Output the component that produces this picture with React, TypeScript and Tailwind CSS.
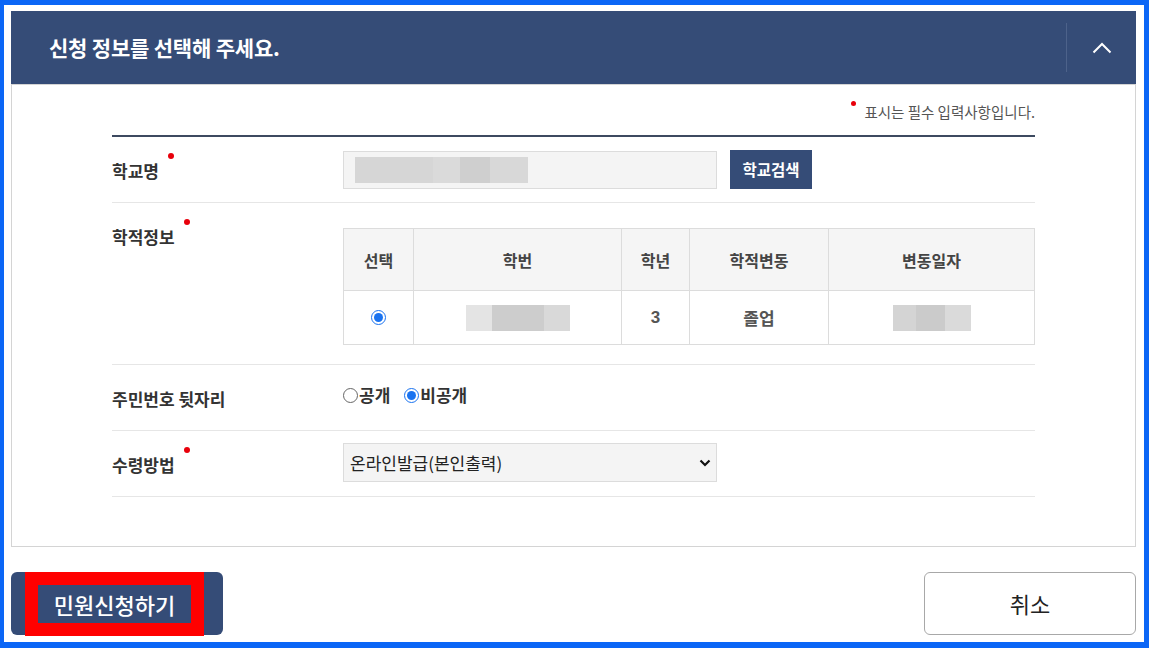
import React from "react";

const FONT = { fontFamily: '"Noto Sans CJK KR", "Noto Sans", sans-serif' };

function Dot() {
  return <span className="absolute -right-[15px] -top-[6px] h-[6px] w-[6px] rounded-full bg-[#e8000b]" />;
}

function Label({ text, required }: { text: string; required?: boolean }) {
  return (
    <div className="w-[231px] shrink-0 pt-[22px]">
      <span className="relative inline-block text-[17px] font-bold leading-[24px] text-[#333]">
        {text}
        {required && <Dot />}
      </span>
    </div>
  );
}

function Blur({ parts }: { parts: [number, string][] }) {
  return (
    <div className="flex h-[26px]">
      {parts.map(([w, c], i) => (
        <div key={i} className="h-full" style={{ width: w, background: c }} />
      ))}
    </div>
  );
}

function Radio({ checked }: { checked?: boolean }) {
  return checked ? (
    <span className="flex h-[15px] w-[15px] items-center justify-center rounded-full border-[1.5px] border-[#1a73f0] bg-white">
      <span className="h-[9px] w-[9px] rounded-full bg-[#1a73f0]" />
    </span>
  ) : (
    <span className="h-[15px] w-[15px] rounded-full border border-[#666] bg-white" />
  );
}

export default function App() {
  const cols = [
    { w: "w-[69px]", h: "선택" },
    { w: "w-[208px]", h: "학번" },
    { w: "w-[68px]", h: "학년" },
    { w: "w-[139px]", h: "학적변동" },
    { w: "flex-1", h: "변동일자" },
  ];

  return (
    <div
      className="flex h-[648px] w-[1149px] flex-col border-b-[6px] border-l-4 border-r-[5px] border-t-[5px] border-[#0b66f6] bg-white pl-[7px] pr-[8px] pt-[6px]"
      style={FONT}
    >
      {/* header */}
      <div className="flex h-[73px] items-center bg-[#354c77]">
        <h2 className="flex-1 pl-[38px] text-[21px] font-bold tracking-[-0.2px] text-white">신청 정보를 선택해 주세요.</h2>
        <div className="flex h-[49px] w-[70px] items-center justify-center border-l border-[#4d628a]">
          <svg width="20" height="12" viewBox="0 0 20 12" fill="none">
            <path d="M1.5 10.5 L10 2 L18.5 10.5" stroke="white" strokeWidth="2" />
          </svg>
        </div>
      </div>

      {/* panel */}
      <div className="h-[463px] border border-[#d4d4d4] px-[100px]">
        <div className="flex h-[50px] items-end justify-end pb-[14px]">
          <span className="relative text-[14.5px] leading-[18px] text-[#555]">
            <span className="absolute -left-[13px] -top-[2px] h-[5px] w-[5px] rounded-full bg-[#e8000b]" />
            표시는 필수 입력사항입니다.
          </span>
        </div>
        <div className="h-[2px] bg-[#3d4a60]" />

        {/* 학교명 */}
        <div className="flex h-[66px] border-b border-[#e6e6e6]">
          <Label text="학교명" required />
          <div className="flex items-center gap-[13px]">
            <div className="flex h-[38px] w-[374px] items-center border border-[#dcdcdc] bg-[#f4f4f4] pl-[11px]">
              <Blur parts={[[78, "#d6d6d6"], [27, "#dadada"], [30, "#cfcfcf"], [38, "#d8d8d8"]]} />
            </div>
            <button className="h-[39px] w-[82px] bg-[#354c77] text-[15.5px] font-bold text-white">학교검색</button>
          </div>
        </div>

        {/* 학적정보 */}
        <div className="flex h-[162px] border-b border-[#e6e6e6]">
          <Label text="학적정보" required />
          <div className="flex-1 pt-[25px]">
            <div className="border border-[#dcdcdc]">
              <div className="flex h-[61px] bg-[#f5f5f5] text-[16px] font-bold text-[#444]">
                {cols.map((c, i) => (
                  <div key={c.h} className={`${c.w} flex items-center justify-center ${i > 0 ? "border-l border-[#dcdcdc]" : ""}`}>
                    {c.h}
                  </div>
                ))}
              </div>
              <div className="flex h-[54px] border-t border-[#dcdcdc] text-[17px] font-bold text-[#555]">
                <div className="flex w-[69px] items-center justify-center">
                  <Radio checked />
                </div>
                <div className="flex w-[208px] items-center justify-center border-l border-[#dcdcdc]">
                  <Blur parts={[[26, "#e4e4e4"], [52, "#cdcdcd"], [26, "#d9d9d9"]]} />
                </div>
                <div className="flex w-[68px] items-center justify-center border-l border-[#dcdcdc]" style={{ fontFamily: '"Liberation Sans", sans-serif' }}>
                  3
                </div>
                <div className="flex w-[139px] items-center justify-center border-l border-[#dcdcdc]">졸업</div>
                <div className="flex flex-1 items-center justify-center border-l border-[#dcdcdc]">
                  <Blur parts={[[23, "#d4d4d4"], [29, "#cbcbcb"], [26, "#dadada"]]} />
                </div>
              </div>
            </div>
          </div>
        </div>

        {/* 주민번호 뒷자리 */}
        <div className="flex h-[66px] border-b border-[#e6e6e6]">
          <Label text="주민번호 뒷자리" />
          <div className="flex items-start gap-[14px] pt-[18px] text-[17px] font-bold leading-[24px] text-[#333]">
            <label className="flex items-center gap-[1px]">
              <Radio />
              공개
            </label>
            <label className="flex items-center gap-[1px]">
              <Radio checked />
              비공개
            </label>
          </div>
        </div>

        {/* 수령방법 */}
        <div className="flex h-[66px] border-b border-[#e6e6e6]">
          <Label text="수령방법" required />
          <div className="pt-[12px]">
            <div className="flex h-[39px] w-[374px] items-center justify-between border border-[#dcdcdc] bg-[#f4f4f4] pl-[6px] pr-[5px] text-[17px] text-[#222]">
              <span>온라인발급(본인출력)</span>
              <svg width="12" height="8" viewBox="0 0 12 8" fill="none">
                <path d="M1.5 1.5 L6 6 L10.5 1.5" stroke="#111" strokeWidth="2.2" />
              </svg>
            </div>
          </div>
        </div>
      </div>

      {/* buttons */}
      <div className="flex justify-between pt-[25px]">
        <button className="flex h-[63px] w-[212px] items-start rounded-[6px] bg-[#354c77] pl-[14px]">
          <span className="flex h-[64px] w-[179px] items-center justify-center border-[13px] border-[#ff0000] text-[22px] font-medium text-white">
            민원신청하기
          </span>
        </button>
        <button className="h-[63px] w-[212px] rounded-[6px] border border-[#a8a8a8] bg-white text-[22px] text-[#222]">취소</button>
      </div>
    </div>
  );
}
